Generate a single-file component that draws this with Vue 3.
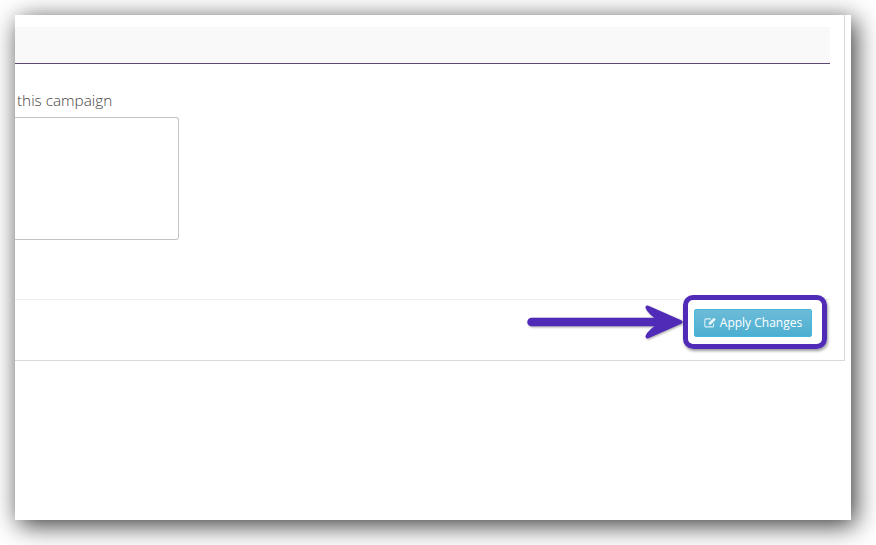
<script setup>
const label = "this campaign";
const buttonText = "Apply Changes";
</script>

<template>
  <div class="page">
    <div class="window">
      <div class="panel">
        <div class="panel-head"></div>
        <div class="panel-body">
          <p class="label">{{ label }}</p>
          <div class="textarea"></div>
        </div>
        <div class="panel-foot">
          <button class="apply">
            <svg class="icon" viewBox="0 0 14 12" width="13" height="11">
              <path d="M10.4 7v2.4A1.4 1.4 0 0 1 9 10.8H2.2A1.4 1.4 0 0 1 .8 9.4V3.4A1.4 1.4 0 0 1 2.2 2H7.4" fill="none" stroke="#fff" stroke-opacity=".8" stroke-width="1.2" />
              <path d="M5 6.2 10.6.8l2.2 2L7.2 8.4H5z" fill="#fff" fill-opacity=".85" />
            </svg>
            {{ buttonText }}
          </button>
          <div class="highlight"></div>
          <svg class="arrow" viewBox="0 0 160 44" width="160" height="44">
            <path d="M8.5 22H150" fill="none" stroke="#4f2bb8" stroke-width="8.5" stroke-linecap="round" />
            <path d="M124.5 7.5 157.5 22 124.5 36.5 C126 32 133 27 141 22 133 17 126 12 124.5 7.5Z" fill="#4f2bb8" stroke="#4f2bb8" stroke-width="4" stroke-linejoin="round" />
          </svg>
        </div>
      </div>
    </div>
  </div>
</template>

<style>
html,
body {
  margin: 0;
  background: #fff;
}
</style>

<style scoped>
.page {
  width: 876px;
  height: 545px;
  padding: 15px 25px 25px 15px;
  box-sizing: border-box;
  overflow: hidden;
  font-family: "Open Sans", "Liberation Sans", sans-serif;
}
.window {
  width: 836px;
  height: 505px;
  background: #fff;
  box-shadow: 4px 5px 24px rgba(0, 0, 0, 0.8);
  overflow: hidden;
}
.panel {
  width: 830px;
  height: 346px;
  box-sizing: border-box;
  padding-top: 12px;
  border-right: 1px solid #d9d9d9;
  border-bottom: 1px solid #d9d9d9;
  display: flex;
  flex-direction: column;
}
.panel-head {
  width: 815px;
  height: 37px;
  box-sizing: border-box;
  background: #f9f9f9;
  border-bottom: 1px solid #5c4a75;
}
.panel-body {
  height: 235px;
  box-sizing: border-box;
  padding-top: 26px;
}
.label {
  margin: 0 0 7px 2px;
  font-size: 15.3px;
  line-height: 20px;
  font-weight: 300;
  color: #444;
}
.textarea {
  width: 164px;
  height: 123px;
  box-sizing: border-box;
  border: 1px solid #c4c4c4;
  border-left: 0;
  border-radius: 0 3px 3px 0;
}
.panel-foot {
  position: relative;
  flex: 1;
  width: 815px;
  box-sizing: border-box;
  border-top: 1px solid #eee;
  display: flex;
  justify-content: flex-end;
  align-items: flex-start;
  padding: 9px 18px 0 0;
}
.apply {
  width: 118px;
  height: 28px;
  padding: 0 0 2px;
  border: 1px solid #46b8da;
  border-radius: 2px;
  background: linear-gradient(#6cbcd8, #4cafd2);
  color: #fff;
  font-family: inherit;
  font-size: 12px;
  font-weight: 500;
  display: flex;
  align-items: center;
  justify-content: center;
  gap: 3px;
}
.icon {
  flex: none;
}
.highlight {
  position: absolute;
  right: 3px;
  top: -5px;
  width: 144px;
  height: 54px;
  box-sizing: border-box;
  border: 5px solid #4f2bb8;
  border-radius: 10px;
  box-shadow: 1px 2px 3px rgba(0, 0, 0, 0.4);
}
.arrow {
  position: absolute;
  right: 147px;
  top: 0;
  filter: drop-shadow(1px 1px 1px rgba(0, 0, 0, 0.35));
}
</style>
